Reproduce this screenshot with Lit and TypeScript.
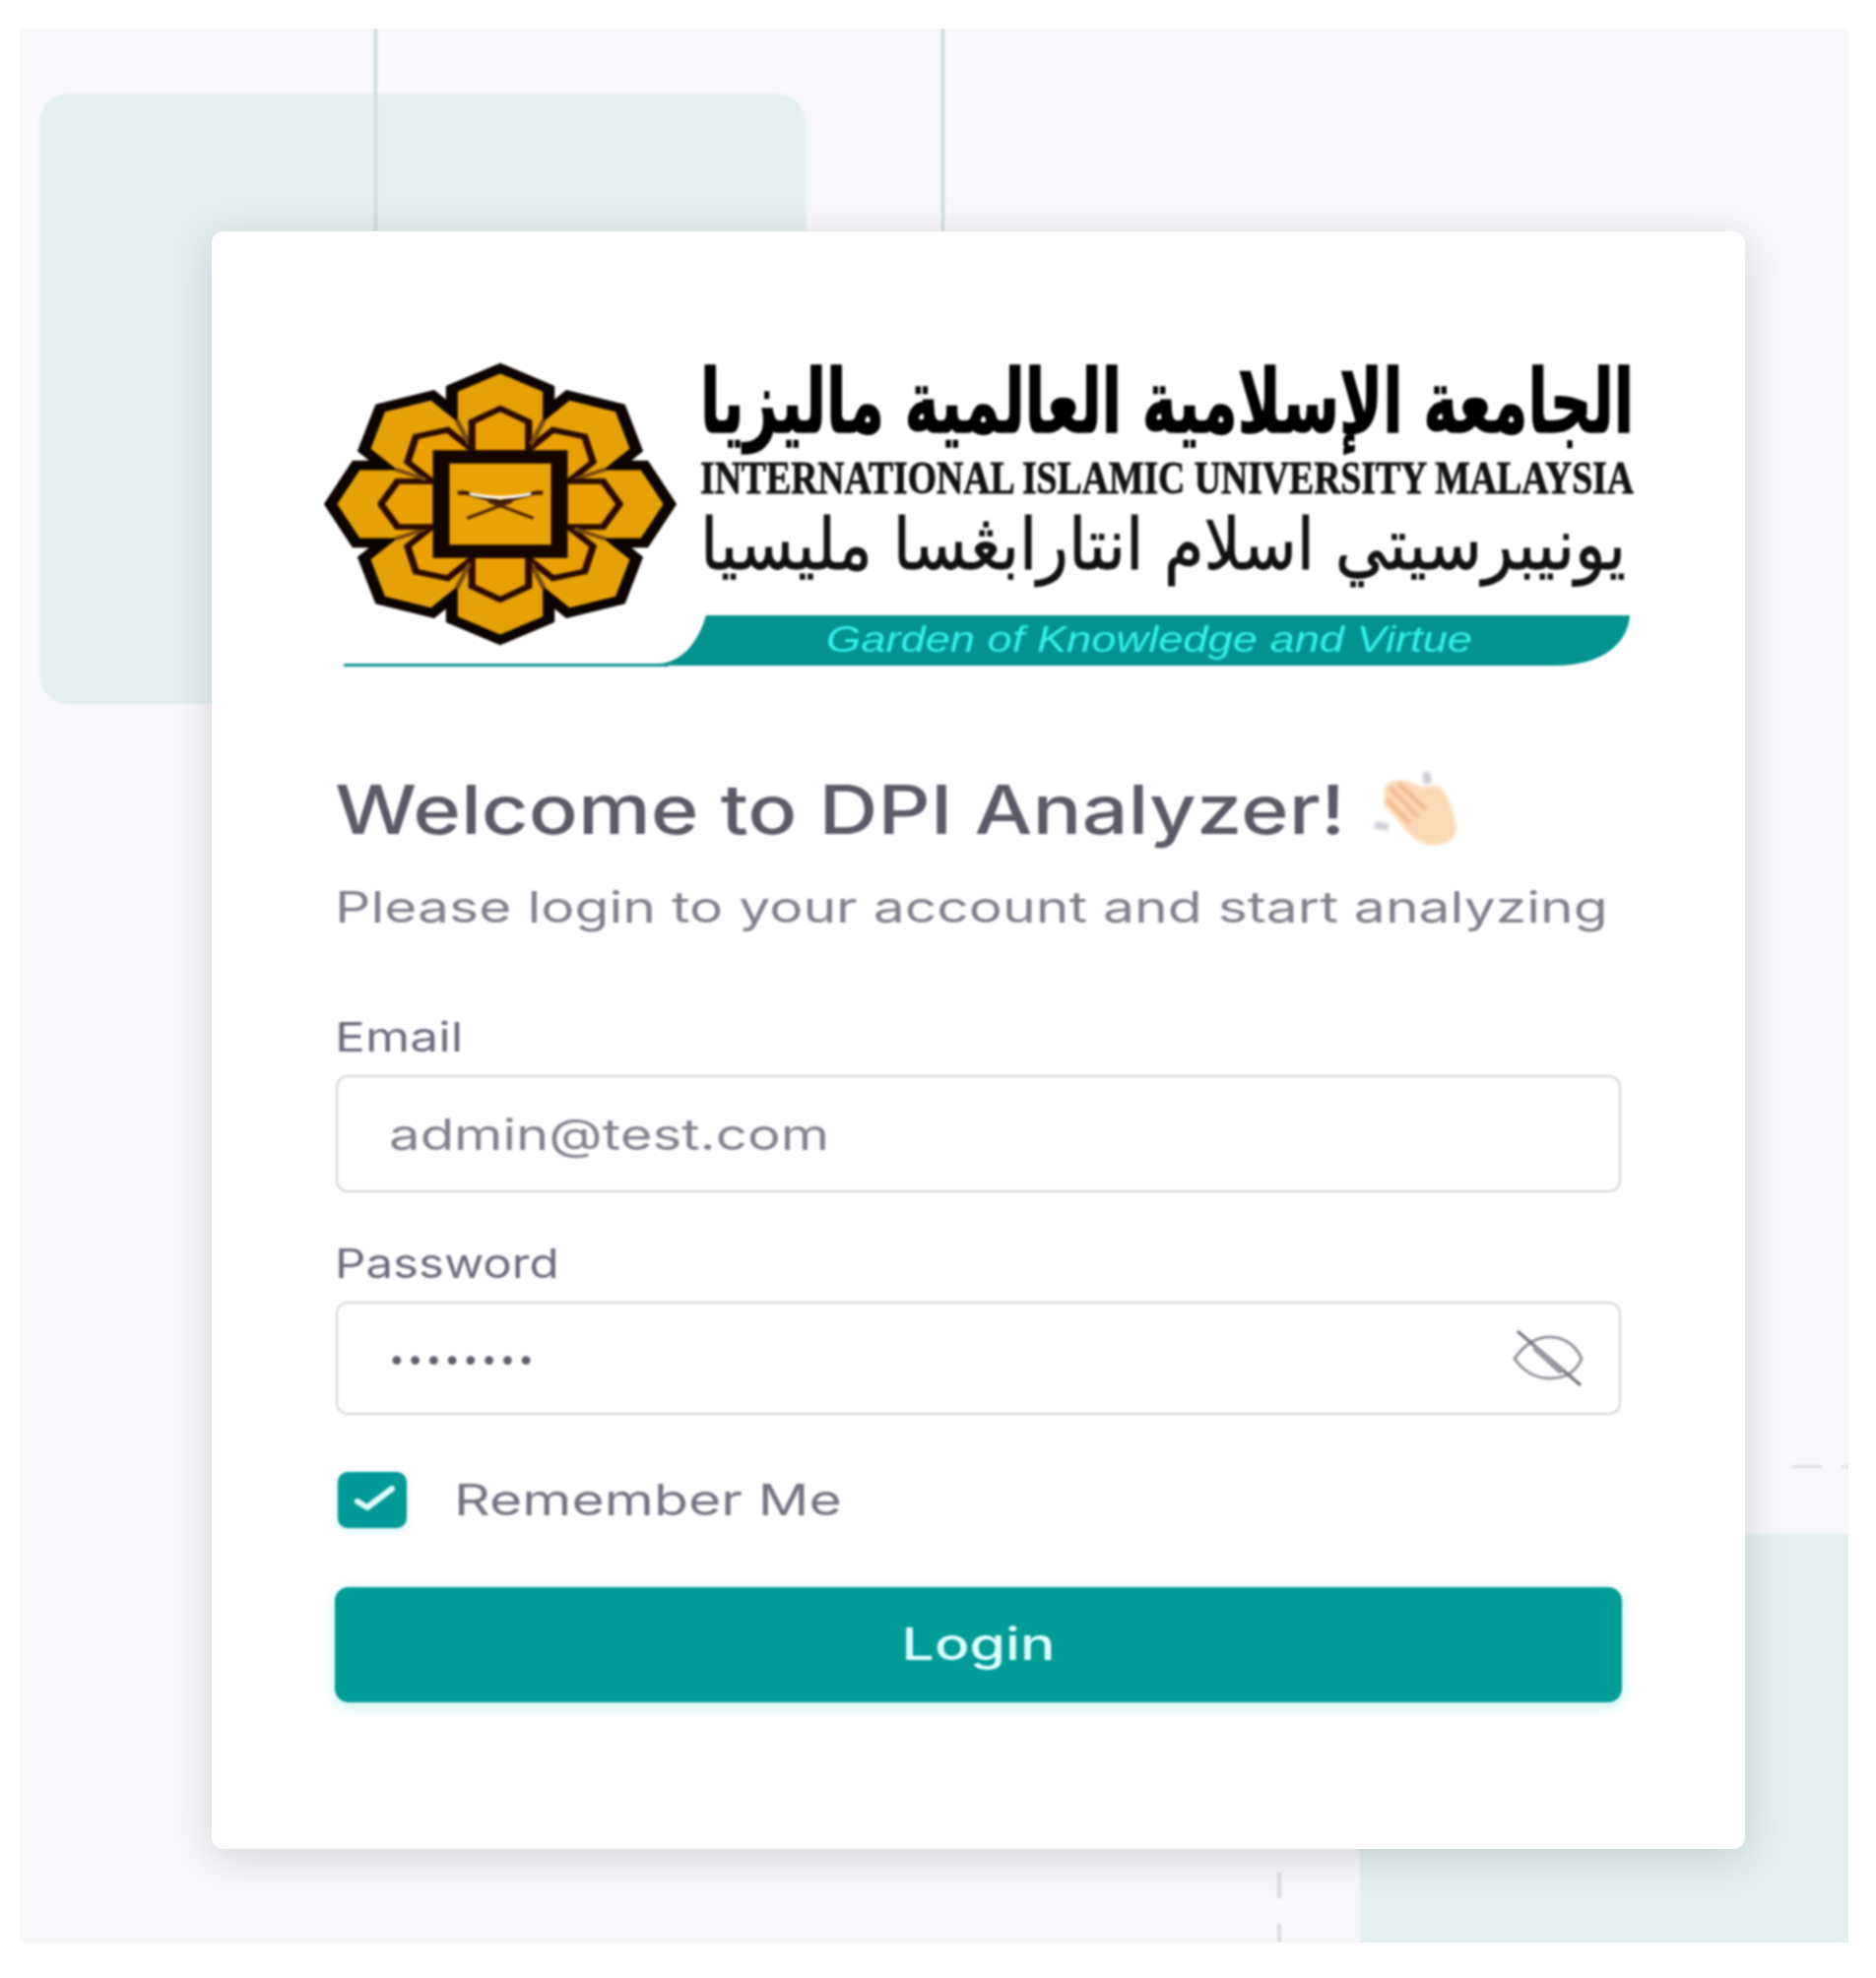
import { LitElement, html, css, svg } from 'lit';
import { customElement } from 'lit/decorators.js';

const ANGLES = [45, 135, 225, 315, 0, 90, 180, 270];
const PETAL = 'M0,-138 L36,-119 L36,-82 L0,-30 L-36,-82 L-36,-119 Z';

// emblem layers, each drawn once per angle so the black only shows on the outside
const petalEdge = (angle: number) => svg`
  <path transform="rotate(${angle})" d=${PETAL} fill="#0b0400" stroke="#0b0400" stroke-width="20" stroke-linejoin="miter"></path>
`;
const petalFill = (angle: number) => svg`
  <path transform="rotate(${angle})" d=${PETAL} fill="#e6a106"></path>
`;
const petalInner = (angle: number) => svg`
  <g transform="rotate(${angle})">
    <path d="M0,-101 L24,-87 L24,-54 L-24,-54 L-24,-87 Z" fill="#ea9f02" stroke="#2a0b00" stroke-width="6"></path>
    <path transform="rotate(22.5)" d="M0,-96 L0,-68" stroke="#7a4a10" stroke-width="4"></path>
  </g>
`;

@customElement('app-root')
export default class App extends LitElement {
  static override styles = css`
    :host {
      display: block;
      font-family: Inter, 'Liberation Sans', sans-serif;
      background: #fff;
      height: 2009px;
      overflow: hidden;
    }
    .panel {
      position: relative;
      box-sizing: border-box;
      margin: 29px 28px 0 20px;
      height: 1944px;
      background: #f8f7fa;
      overflow: hidden;
      padding: 206px 0 0 195px;
    }
    .block {
      position: absolute;
      background: #e3f0ef;
      border-radius: 30px;
      filter: blur(1px);
    }
    .block--top {
      left: 20px;
      top: 66px;
      width: 778px;
      height: 620px;
    }
    .block--bottom {
      left: 1361px;
      top: 1529px;
      width: 700px;
      height: 700px;
    }
    .rule {
      position: absolute;
      background: #ccdcdc;
      filter: blur(0.8px);
    }
    .rule--a { left: 360px; top: 0; width: 3px; height: 206px; }
    .rule--b { left: 936px; top: 0; width: 3px; height: 206px; }
    .rule--c { left: 1277px; top: 1873px; width: 4px; height: 26px; background: #dcdcdf; }
    .rule--d { left: 1277px; top: 1925px; width: 4px; height: 19px; background: #dcdcdf; }
    .rule--e { left: 1800px; top: 1459px; width: 30px; height: 3px; background: #e0e0e3; }
    .rule--f { left: 1850px; top: 1459px; width: 8px; height: 3px; background: #e0e0e3; }
    .card {
      position: relative;
      box-sizing: border-box;
      width: 1557px;
      height: 1643px;
      padding: 125px 125px 0;
      background: #fff;
      border-radius: 12px;
      box-shadow: 0 8px 40px rgba(75, 70, 92, 0.2);
    }
    .logo {
      display: block;
      margin-left: -15px;
      width: 1335px;
      height: 320px;
      filter: blur(0.8px);
    }
    .soft {
      filter: blur(0.8px);
    }
    .wide {
      display: inline-block;
      white-space: nowrap;
      transform-origin: left center;
    }
    .title {
      display: flex;
      align-items: center;
      margin: 97px 0 0;
      height: 90px;
      font-size: 69px;
      font-weight: 500;
      color: #5d5a68;
    }
    .title .wide {
      transform: scaleX(1.204);
    }
    .clap {
      display: block;
      flex: none;
      width: 120px;
      height: 105px;
      margin-left: 190px;
      filter: blur(1.6px);
    }
    .subtitle {
      margin: 24px 0 0;
      height: 60px;
      line-height: 60px;
      font-size: 44px;
      font-weight: 400;
      color: #827f8c;
    }
    .subtitle .wide {
      transform: scaleX(1.296);
    }
    .label {
      display: block;
      height: 50px;
      line-height: 50px;
      font-size: 41px;
      color: #6f6b7d;
    }
    .label--email {
      margin-top: 77px;
      margin-bottom: 14px;
    }
    .label--email .wide {
      transform: scaleX(1.26);
    }
    .label--password {
      margin-top: 47px;
      margin-bottom: 14px;
    }
    .label--password .wide {
      transform: scaleX(1.2);
    }
    .box {
      display: flex;
      align-items: center;
      box-sizing: border-box;
      width: 1305px;
      margin-left: 1px;
      padding: 0 16px 0 52px;
      background: #fff;
      border: 2px solid #d6d5da;
      border-radius: 12px;
    }
    .box--email {
      height: 119px;
    }
    .box--password {
      height: 115px;
    }
    .box input {
      flex: none;
      padding: 0;
      border: 0;
      outline: 0;
      background: transparent;
      font-family: inherit;
      transform-origin: left center;
    }
    .box--email input {
      width: 900px;
      font-size: 44px;
      color: #84818e;
      transform: scaleX(1.28);
    }
    .box--password input {
      width: 1100px;
      font-size: 28px;
      letter-spacing: 3px;
      color: #5f5c6c;
    }
    .eye {
      display: block;
      margin-left: auto;
      margin-right: 16px;
      width: 80px;
      height: 60px;
    }
    .remember {
      display: flex;
      align-items: center;
      margin-top: 58px;
      margin-left: 3px;
      height: 57px;
    }
    .check {
      display: block;
      flex: none;
      width: 70px;
      height: 57px;
      background: #029a97;
      border-radius: 10px;
      box-shadow: 0 2px 6px rgba(0, 200, 200, 0.25);
    }
    .remember__text {
      margin-left: 48px;
      margin-top: -2px;
      font-size: 44px;
      color: #767382;
    }
    .remember__text .wide {
      transform: scaleX(1.3);
    }
    .login {
      display: flex;
      align-items: center;
      justify-content: center;
      box-sizing: border-box;
      width: 100%;
      height: 117px;
      margin-top: 60px;
      padding: 0 0 3px;
      border: 0;
      border-radius: 14px;
      background: #009c97;
      box-shadow: 0 4px 14px rgba(0, 190, 190, 0.22);
      color: #e2ffff;
      font-family: inherit;
      font-size: 45px;
      font-weight: 500;
    }
    .login .wide {
      transform: scaleX(1.31);
      transform-origin: center;
    }
  `;

  override render() {
    return html`
      <div class="panel">
        <div class="block block--top"></div>
        <div class="block block--bottom"></div>
        <div class="rule rule--a"></div>
        <div class="rule rule--b"></div>
        <div class="rule rule--c"></div>
        <div class="rule rule--d"></div>
        <div class="rule rule--e"></div>
        <div class="rule rule--f"></div>
        <div class="card">
          ${this.renderLogo()}
          <h1 class="title soft">
            <span class="wide">Welcome to DPI Analyzer!</span>
            ${this.renderClap()}
          </h1>
          <p class="subtitle soft"><span class="wide">Please login to your account and start analyzing</span></p>
          <label class="label label--email soft"><span class="wide">Email</span></label>
          <div class="box box--email soft"><input type="text" .value=${'admin@test.com'} /></div>
          <label class="label label--password soft"><span class="wide">Password</span></label>
          <div class="box box--password soft">
            <input type="password" .value=${'password'} />
            <svg class="eye" viewBox="0 0 80 60" fill="none" stroke="#95939c" stroke-linecap="round">
              <path d="M6,30 C18,12 32,8 42,8 C56,8 68,16 74,30 C68,44 56,50 42,50 C28,50 16,44 6,30 Z" stroke-width="3"></path>
              <path d="M10,3 L72,56" stroke-width="3.5" stroke="#7a7883"></path>
              <path d="M28,20 L52,42" stroke-width="6" stroke="#9a98a1"></path>
            </svg>
          </div>
          <div class="remember soft">
            <svg class="check" viewBox="0 0 70 57" fill="none">
              <path d="M20,30 L30,36 L55,17" stroke="#dffcfb" stroke-width="6" stroke-linecap="round" stroke-linejoin="round"></path>
            </svg>
            <span class="remember__text"><span class="wide">Remember Me</span></span>
          </div>
          <button class="login soft"><span class="wide">Login</span></button>
        </div>
      </div>
    `;
  }

  renderLogo() {
    // viewBox is in page pixels measured from the left/top of the logo (325, 360)
    return html`
      <svg class="logo" viewBox="0 0 1335 320">
        <g transform="translate(183,152) scale(1.2,0.96)">
          ${ANGLES.map((a) => petalEdge(a))}
          ${ANGLES.map((a) => petalFill(a))}
          ${ANGLES.map((a) => petalInner(a))}
          <rect x="-50" y="-50" width="100" height="100" fill="#e9a304" stroke="#130500" stroke-width="14"></rect>
          <path d="M-36,-12 L-30,-12 L0,-2 L30,-12 L36,-12" fill="none" stroke="#3a1500" stroke-width="4"></path>
          <path d="M-26,-11 Q0,-3 26,-11" fill="none" stroke="#fff" stroke-width="3"></path>
          <path d="M-28,15 L10,-3 M28,15 L-10,-3" fill="none" stroke="#4a2000" stroke-width="3"></path>
        </g>
        <g transform="translate(1334,79) scale(1,1.32)">
          <text x="0" y="0" textLength="948" lengthAdjust="spacingAndGlyphs" font-family="'DejaVu Sans', sans-serif" font-weight="700" font-size="68" stroke="#000" stroke-width="1.1" fill="#000" direction="rtl">الجامعة الإسلامية العالمية ماليزيا</text>
        </g>
        <g transform="translate(386,141) scale(1,1.3)">
          <text x="0" y="0" textLength="948" lengthAdjust="spacingAndGlyphs" font-family="'Liberation Serif', serif" font-weight="700" font-size="35" stroke="#111" stroke-width="0.6" fill="#111">INTERNATIONAL ISLAMIC UNIVERSITY MALAYSIA</text>
        </g>
        <g transform="translate(1326,218) scale(1,1.25)">
          <text x="0" y="0" textLength="940" lengthAdjust="spacingAndGlyphs" font-family="'DejaVu Sans', sans-serif" font-size="58" stroke="#111" stroke-width="0.7" fill="#111" direction="rtl">يونيبرسيتي اسلام انتارابڠسا مليسيا</text>
        </g>
        <path d="M345,314 C368,312 384,292 392,265 L1330,265 C1328,295 1300,316 1255,316 L345,316 Z" fill="#03938e"></path>
        <rect x="24" y="314" width="330" height="3" fill="#13908c"></rect>
        <text x="514" y="302" textLength="656" lengthAdjust="spacingAndGlyphs" font-family="'Liberation Sans', sans-serif" font-style="italic" font-size="36" fill="#35f2ea">Garden of Knowledge and Virtue</text>
      </svg>
    `;
  }

  renderClap() {
    return html`
      <svg class="clap" viewBox="0 0 120 105">
        <path d="M24,30 C30,18 50,22 62,30 L74,28 C84,30 88,36 94,58 C100,76 96,88 72,88 C54,88 44,70 24,48 Z" fill="#fcd9b6"></path>
        <path d="M30,30 L58,60 M38,26 L66,52 M26,42 L50,66" stroke="#eebb92" stroke-width="5" fill="none"></path>
        <path d="M66,14 L68,26" stroke="#c9ccd4" stroke-width="8"></path>
        <path d="M14,68 L28,70" stroke="#c9ccd4" stroke-width="7"></path>
      </svg>
    `;
  }
}
